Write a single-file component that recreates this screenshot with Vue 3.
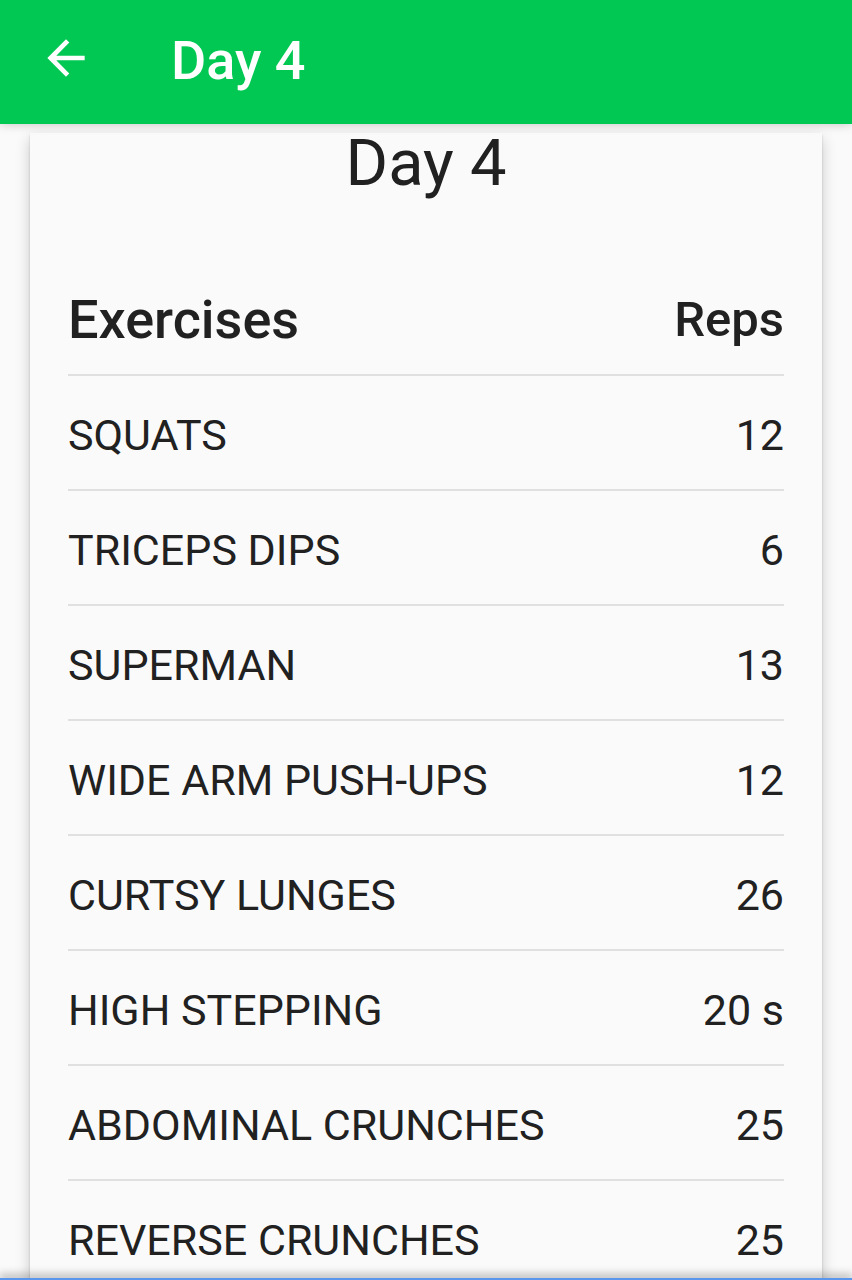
<script setup>
const rows = [
  ['SQUATS', '12'],
  ['TRICEPS DIPS', '6'],
  ['SUPERMAN', '13'],
  ['WIDE ARM PUSH-UPS', '12'],
  ['CURTSY LUNGES', '26'],
  ['HIGH STEPPING', '20 s'],
  ['ABDOMINAL CRUNCHES', '25'],
  ['REVERSE CRUNCHES', '25'],
]
</script>

<template>
  <div class="screen">
    <header class="bar">
      <button class="back" type="button" aria-label="Back">
        <svg width="56" height="56" viewBox="0 0 24 24" fill="#fff">
          <path d="M20 11H7.83l5.59-5.59L12 4l-8 8 8 8 1.41-1.41L7.83 13H20v-2z" />
        </svg>
      </button>
      <h1 class="bar-title">Day 4</h1>
    </header>
    <main class="content">
      <section class="card">
        <h2 class="day">Day 4</h2>
        <table class="list">
          <thead>
            <tr><th scope="col">Exercises</th><th scope="col" class="reps">Reps</th></tr>
          </thead>
          <tbody>
            <tr v-for="row in rows" :key="row[0]">
              <td>{{ row[0] }}</td>
              <td class="reps">{{ row[1] }}</td>
            </tr>
          </tbody>
        </table>
      </section>
    </main>
    <div class="edge"></div>
  </div>
</template>

<style>
body { background: #fafafa; overflow: hidden; }
</style>

<style scoped>
.screen {
  height: 100vh;
  display: flex;
  flex-direction: column;
  overflow: hidden;
  font-family: Roboto, "Liberation Sans", sans-serif;
  color: #212121;
}
.bar {
  flex: none;
  display: flex;
  align-items: center;
  height: 124px;
  box-sizing: border-box;
  padding: 0 38px 8px;
  background: #00c853;
  box-shadow: 0 0 10px rgba(0, 0, 0, 0.22);
  z-index: 1;
}
.back {
  display: flex;
  padding: 0;
  border: 0;
  background: none;
}
.bar-title {
  margin: 0 0 0 77px;
  padding-top: 6px;
  font-size: 54px;
  line-height: 64px;
  font-weight: 500;
  color: #fff;
}
.content {
  flex: 1;
  min-height: 0;
  overflow: hidden;
  padding: 0 30px;
}
.card {
  margin-top: 9px;
  padding: 0 38px;
  box-shadow: 0 6px 14px rgba(0, 0, 0, 0.2), 0 2px 2px rgba(0, 0, 0, 0.16);
}
.day {
  margin: 0;
  padding-bottom: 73px;
  font-size: 65px;
  line-height: 60px;
  font-weight: 400;
  text-align: center;
}
.list {
  width: 100%;
  border-collapse: separate;
  border-spacing: 0;
}
th {
  height: 106px;
  padding: 0 0 2px;
  border-bottom: 2px solid #e0e0e0;
  font-size: 54px;
  font-weight: 500;
  text-align: left;
}
td {
  height: 108px;
  padding: 5px 0 0;
  border-bottom: 2px solid #e0e0e0;
  font-size: 43px;
}
.reps { text-align: right; }
th.reps { font-size: 49px; }
.edge {
  flex: none;
  height: 2px;
  background: #5a96ee;
  box-shadow: 0 -1px 10px 1px rgba(0, 0, 0, 0.5);
  z-index: 1;
}
</style>
